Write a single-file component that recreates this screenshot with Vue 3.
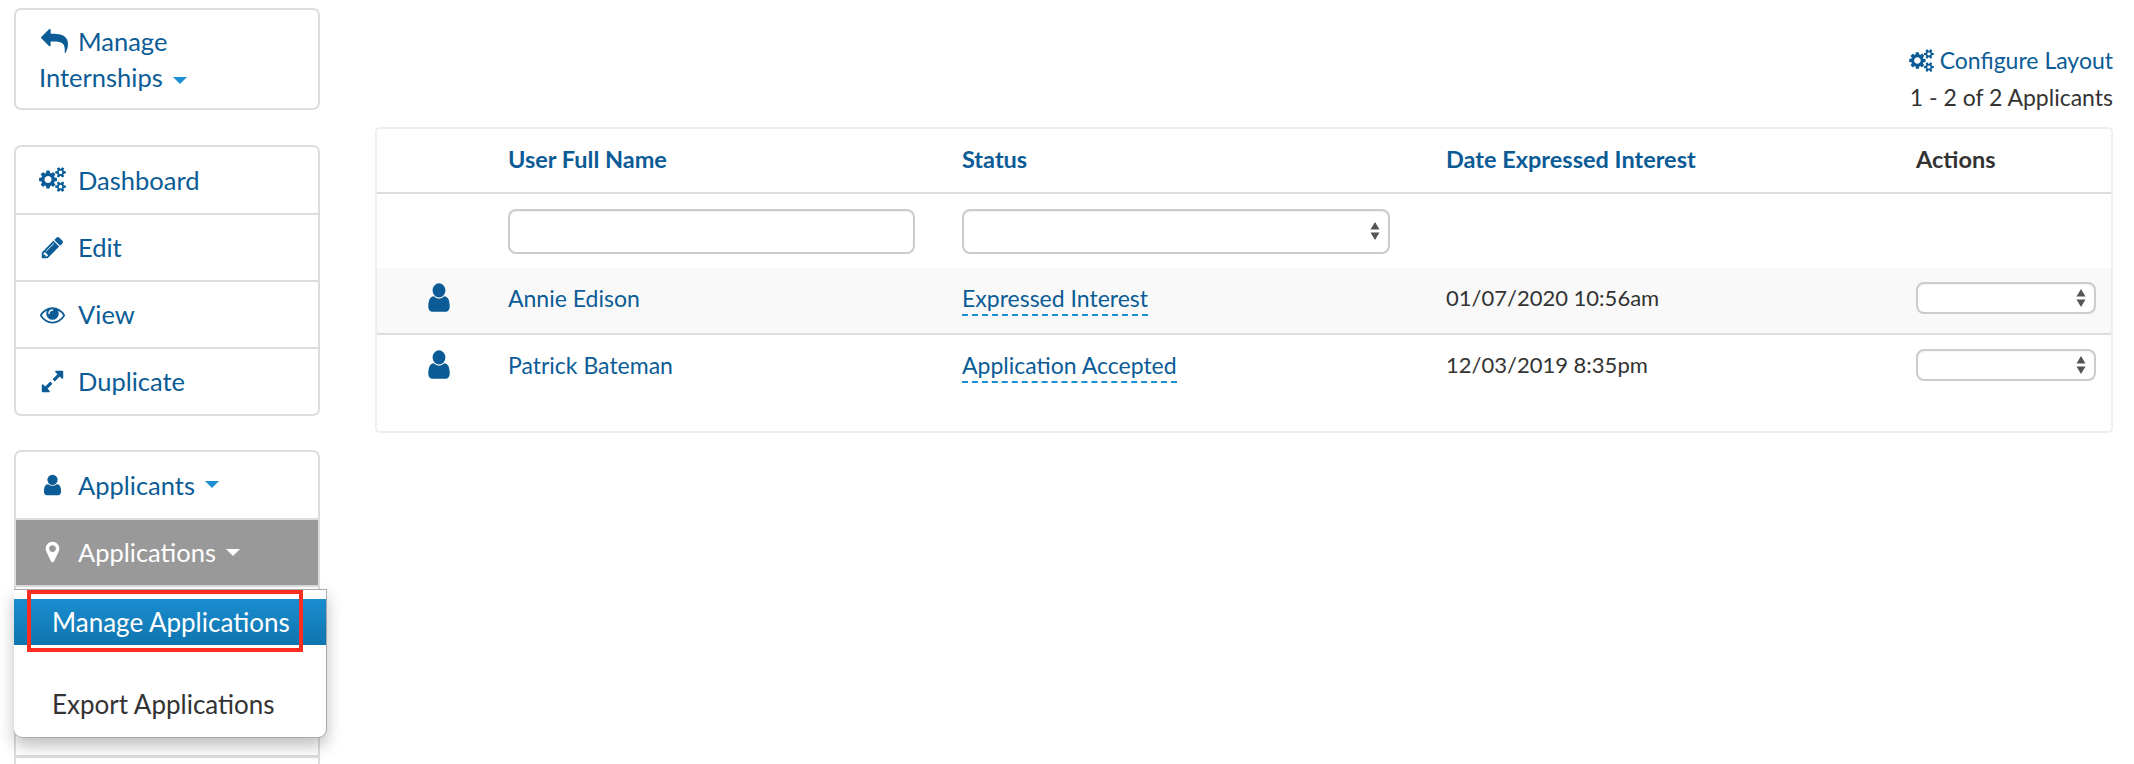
<script setup>
const cogs = 'M896 896q0-106-75-181t-181-75-181 75-75 181 75 181 181 75 181-75 75-181zm768 512q0-52-38-90t-90-38-90 38-38 90q0 53 37.5 90.5t90.5 37.5 90.5-37.5 37.5-90.5zm0-1024q0-52-38-90t-90-38-90 38-38 90q0 53 37.5 90.5t90.5 37.5 90.5-37.5 37.5-90.5zm-384 421v185q0 10-7 19.5t-16 10.5l-155 24q-11 35-32 76 34 48 90 115 7 11 7 20 0 12-7 19-23 30-82.5 89.5t-78.5 59.5q-11 0-21-7l-115-90q-37 19-77 31-11 108-23 155-7 24-30 24h-186q-11 0-20-7.5t-10-17.5l-23-153q-34-10-75-31l-118 89q-7 7-20 7-11 0-21-8-144-133-144-160 0-9 7-19 10-14 41-53t47-61q-23-44-35-82l-152-24q-10-1-17-9.5t-7-19.5v-185q0-10 7-19.5t16-10.5l155-24q11-35 32-76-34-48-90-115-7-11-7-20 0-12 7-20 22-30 82-89t79-59q11 0 21 7l115 90q34-18 77-32 11-108 23-154 7-24 30-24h186q11 0 20 7.5t10 17.5l23 153q34 10 75 31l118-89q8-7 20-7 11 0 21 8 144 133 144 160 0 8-7 19-12 16-42 54t-45 60q23 48 34 82l152 23q10 2 17 10.5t7 19.5zm640 533v140q0 16-149 31-12 27-30 52 51 113 51 138 0 4-4 7-122 71-124 71-8 0-46-47t-52-68q-20 2-30 2t-30-2q-14 21-52 68t-46 47q-2 0-124-71-4-3-4-7 0-25 51-138-18-25-30-52-149-15-149-31v-140q0-16 149-31 13-29 30-52-51-113-51-138 0-4 4-7 4-2 35-20t59-34 30-16q8 0 46 46.5t52 67.5q20-2 30-2t30 2q51-71 92-112l6-2q4 0 124 70 4 3 4 7 0 25-51 138 17 23 30 52 149 15 149 31zm0-1024v140q0 16-149 31-12 27-30 52 51 113 51 138 0 4-4 7-122 71-124 71-8 0-46-47t-52-68q-20 2-30 2t-30-2q-14 21-52 68t-46 47q-2 0-124-71-4-3-4-7 0-25 51-138-18-25-30-52-149-15-149-31v-140q0-16 149-31 13-29 30-52-51-113-51-138 0-4 4-7 4-2 35-20t59-34 30-16q8 0 46 46.5t52 67.5q20-2 30-2t30 2q51-71 92-112l6-2q4 0 124 70 4 3 4 7 0 25-51 138 17 23 30 52 149 15 149 31z'
const reply = 'M1792 1120q0 166-127 451-3 7-10.5 24t-13.5 30-13 22q-12 17-28 17-15 0-23.5-10t-8.5-25q0-9 2.5-26.5t2.5-23.5q5-68 5-123 0-101-17.5-181t-48.5-138.5-80-101-105.5-69.5-133-42.5-154-21.5-175.5-6h-224v256q0 26-19 45t-45 19-45-19l-512-512q-19-19-19-45t19-45l512-512q19-19 45-19t45 19 19 45v256h224q713 0 875 403 53 134 53 333z'
const pencil = 'M491 1536l91-91-235-235-91 91v107h128v128h107zm523-928q0-22-22-22-10 0-17 7l-542 542q-7 7-7 17 0 22 22 22 10 0 17-7l542-542q7-7 7-17zm-54-192l416 416-832 832h-416v-416zm683 96q0 53-37 90l-166 166-416-416 166-165q36-38 90-38 53 0 91 38l235 234q37 39 37 91z'
const eye = 'M1664 960q-152-236-381-353 61 104 61 225 0 185-131.5 316.5t-316.5 131.5-316.5-131.5-131.5-316.5q0-121 61-225-229 117-381 353 133 205 333.5 326.5t434.5 121.5 434.5-121.5 333.5-326.5zm-720-384q0-20-14-34t-34-14q-125 0-214.5 89.5t-89.5 214.5q0 20 14 34t34 14 34-14 14-34q0-86 61-147t147-61q20 0 34-14t14-34zm848 384q0 34-20 69-140 230-376.5 368.5t-499.5 138.5-499.5-139-376.5-368q-20-35-20-69t20-69q140-229 376.5-368t499.5-139 499.5 139 376.5 368q20 35 20 69z'
const expand = 'M883 1056q0 13-10 23l-332 332 144 144q19 19 19 45t-19 45-45 19h-448q-26 0-45-19t-19-45v-448q0-26 19-45t45-19 45 19l144 144 332-332q10-10 23-10t23 10l114 114q10 10 10 23zm781-864v448q0 26-19 45t-45 19-45-19l-144-144-332 332q-10 10-23 10t-23-10l-114-114q-10-10-10-23t10-23l332-332-144-144q-19-19-19-45t19-45 45-19h448q26 0 45 19t19 45z'
const user = 'M1536 1399q0 109-62.5 187t-150.5 78h-854q-88 0-150.5-78t-62.5-187q0-85 8.5-160.5t31.5-152 58.5-131 94-89 134.5-34.5q131 128 313 128t313-128q76 0 134.5 34.5t94 89 58.5 131 31.5 152 8.5 160.5zm-256-887q0 159-112.5 271.5t-271.5 112.5-271.5-112.5-112.5-271.5 112.5-271.5 271.5-112.5 271.5 112.5 112.5 271.5z'
const marker = 'M1152 640q0-106-75-181t-181-75-181 75-75 181 75 181 181 75 181-75 75-181zm256 0q0 109-33 179l-364 774q-16 33-47.5 52t-67.5 19-67.5-19-46.5-52l-365-774q-33-70-33-179 0-212 150-362t362-150 362 150 150 362z'

const navItems = [
  { label: 'Dashboard', d: cogs, vb: '0 0 1920 1792' },
  { label: 'Edit', d: pencil, vb: '0 0 1792 1792' },
  { label: 'View', d: eye, vb: '0 0 1792 1792' },
  { label: 'Duplicate', d: expand, vb: '0 0 1792 1792' }
]
const rows = [
  { name: 'Annie Edison', status: 'Expressed Interest', date: '01/07/2020 10:56am' },
  { name: 'Patrick Bateman', status: 'Application Accepted', date: '12/03/2019 8:35pm' }
]
</script>

<template>
  <div class="page">
    <aside class="sidebar">
      <div class="box box-top">
        <a class="wrap-link">
          <svg class="ico ico-reply" viewBox="0 0 1792 1792"><path :d="reply" /></svg>
          <span>Manage Internships</span>
          <i class="caret"></i>
        </a>
      </div>

      <div class="box box-mid">
        <a v-for="item in navItems" :key="item.label" class="nav-row">
          <span class="ico-slot"><svg class="ico" :viewBox="item.vb"><path :d="item.d" /></svg></span>
          <span>{{ item.label }}</span>
        </a>
      </div>

      <div class="box box-last">
        <a class="nav-row">
          <span class="ico-slot"><svg class="ico ico-sm" viewBox="0 0 1792 1792"><path :d="user" /></svg></span>
          <span>Applicants</span>
          <i class="caret"></i>
        </a>
        <a class="nav-row active">
          <span class="ico-slot"><svg class="ico ico-sm" viewBox="0 0 1792 1792"><path :d="marker" /></svg></span>
          <span>Applications</span>
          <i class="caret"></i>
        </a>
        <div class="blank-row"></div>
        <div class="blank-row-2"></div>

        <div class="dropdown">
          <a class="dd-item dd-on">Manage Applications</a>
          <a class="dd-item dd-off">Export Applications</a>
          <div class="highlight"></div>
        </div>
      </div>
    </aside>

    <main class="main">
      <div class="tools">
        <a class="configure">
          <svg class="ico ico-cfg" viewBox="0 0 1920 1792"><path :d="cogs" /></svg>
          <span>Configure Layout</span>
        </a>
        <div class="count">1 - 2 of 2 Applicants</div>
      </div>

      <div class="card">
        <table class="grid">
          <colgroup>
            <col class="c1" /><col class="c2" /><col class="c3" /><col class="c4" /><col class="c5" />
          </colgroup>
          <thead>
            <tr class="head">
              <th></th>
              <th class="lnk">User Full Name</th>
              <th class="lnk">Status</th>
              <th class="lnk">Date Expressed Interest</th>
              <th>Actions</th>
            </tr>
            <tr class="filters">
              <td></td>
              <td><input class="field name-field" type="text" /></td>
              <td>
                <div class="sel status-sel">
                  <svg class="updown" viewBox="0 0 10 20"><path d="M5 1l4.5 7.5H.5zM5 19L.5 11.500h9z" /></svg>
                </div>
              </td>
              <td></td>
              <td></td>
            </tr>
          </thead>
          <tbody>
            <tr v-for="(r, i) in rows" :key="r.name" class="row" :class="{ odd: i === 0 }">
              <td class="person"><svg class="ico ico-person" viewBox="0 0 1792 1792" preserveAspectRatio="none"><path :d="user" /></svg></td>
              <td class="lnk-cell">{{ r.name }}</td>
              <td><span class="status">{{ r.status }}</span></td>
              <td class="date">{{ r.date }}</td>
              <td>
                <div class="sel action-sel">
                  <svg class="updown" viewBox="0 0 10 20"><path d="M5 1l4.500 7.500H.5zM5 19L.5 11.500h9z" /></svg>
                </div>
              </td>
            </tr>
          </tbody>
        </table>
      </div>
    </main>
  </div>
</template>

<style>
html, body { margin: 0; padding: 0; background: #fff; }
</style>

<style scoped>
.page {
  display: flex;
  height: 764px;
  overflow: hidden;
  font-family: Lato, "Noto Sans", sans-serif;
  font-size: 23px;
  color: #333;
  box-sizing: border-box;
  padding: 8px 21px 0 14px;
}
.sidebar { width: 306px; flex: none; display: flex; flex-direction: column; }
.main { flex: 1; margin-left: 55px; min-width: 0; }

.box {
  border: 2px solid #ddd;
  border-radius: 7px;
  background: #fff;
  color: #0b5c96;
  font-size: 25.5px;
}
.box-top { padding: 13px 23px; line-height: 36px; height: 104px; box-sizing: border-box; margin-bottom: 35px; }
.box-mid { margin-bottom: 34px; }
.wrap-link { display: block; width: 200px; }
.ico { fill: currentColor; display: inline-block; vertical-align: middle; }
.ico-reply { width: 27px; height: 27px; margin: -6px 10px 0 2px; }
.caret {
  display: inline-block;
  width: 0; height: 0;
  margin-left: 10px;
  vertical-align: middle;
  border-left: 7px solid transparent;
  border-right: 7px solid transparent;
  border-top: 7px solid #1a8fd1;
}
.nav-row {
  display: flex;
  align-items: center;
  height: 64px;
  padding-left: 23px;
  padding-bottom: 1px;
  border-top: 2px solid #ddd;
}
.nav-row:first-child { border-top: 0; height: 65px; }
.ico-slot { width: 39px; flex: none; display: flex; }
.ico-slot .ico { width: 27px; height: 25px; }
.ico-slot .ico-sm { width: 27px; height: 24px; }
.box-last { position: relative; height: 400px; }
.active { background: #999; color: #fff; border-top: 2px solid #ddd; border-bottom: 2px solid #ddd; }
.active .caret { border-top-color: #fff; }
.blank-row { height: 168px; border-bottom: 3px solid #ddd; }
.blank-row-2 { height: 60px; }

.dropdown {
  position: absolute;
  left: -2px;
  top: 137px;
  width: 313px;
  height: 149px;
  box-sizing: border-box;
  background: #fff;
  border: 1px solid #aaa;
  border-left: 0;
  border-radius: 0 0 9px 9px;
  box-shadow: 0 8px 16px rgba(0, 0, 0, .25);
  padding-top: 9px;
  font-size: 26px;
  color: #333;
}
.dd-item { display: block; padding-left: 38px; height: 46px; line-height: 46px; }
.dd-on { background: linear-gradient(#1a8dcf, #0f75af); color: #fff; }
.dd-off { margin-top: 36px; }
.highlight {
  position: absolute;
  left: 13px;
  top: 0;
  width: 276px;
  height: 62px;
  box-sizing: border-box;
  border: 4px solid #fb2c20;
}

.tools { height: 119px; box-sizing: border-box; padding-top: 38px; text-align: right; }
.configure { display: flex; justify-content: flex-end; align-items: center; gap: 6px; height: 28px; color: #0b5c96; }
.ico-cfg { width: 25px; height: 23px; }
.count { margin-top: 9px; line-height: 28px; }

.card {
  border: 2px solid #eee;
  border-radius: 5px;
  height: 306px;
  box-sizing: border-box;
}
.grid { width: 100%; border-collapse: collapse; table-layout: fixed; }
.c1 { width: 119px; } .c2 { width: 454px; } .c3 { width: 484px; } .c4 { width: 470px; }
th, td { padding: 0 12px; text-align: left; }
th { font-weight: 700; font-size: 23.500px; padding-bottom: 4px; }
.lnk { color: #0b5c96; }
.head { height: 64px; border-bottom: 2px solid #ddd; }
.filters { height: 75px; }
.row { height: 66px; }
.row td { padding-bottom: 6px; }
.row.odd { background: #f9f9f9; border-bottom: 2px solid #ddd; }
.lnk-cell { color: #0b5c96; }
.person { text-align: left; padding-left: 47px; }
.ico-person { width: 30px; height: 33px; color: #0b5c96; }
.status { color: #0b5c96; border-bottom: 2px dashed #1a8fd1; padding-bottom: 2px; }
.date { font-size: 22px; }

.field, .sel {
  display: block;
  box-sizing: border-box;
  border: 2px solid #ccc;
  border-radius: 8px;
  background: #fff;
  box-shadow: inset 0 1px 2px rgba(0,0,0,.06);
}
.name-field { width: 407px; height: 45px; margin: 0; padding: 0; outline: 0; }
.sel { position: relative; }
.status-sel { width: 428px; height: 45px; }
.action-sel { width: 180px; height: 32px; }
.updown { position: absolute; right: 8px; top: 50%; width: 10px; height: 20px; margin-top: -10px; fill: #555; }
</style>
